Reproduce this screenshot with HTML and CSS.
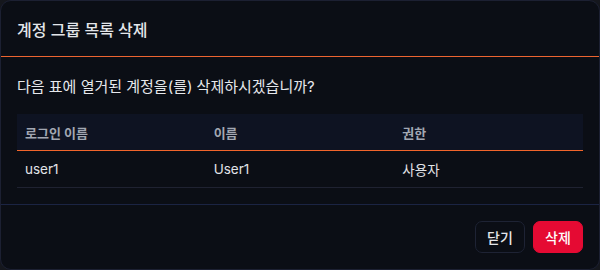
FILE: index.html
```html
<!DOCTYPE html>
<html lang="ko">
<head>
<meta charset="utf-8">
<link rel="stylesheet" href="styles.css">
</head>
<body>
<div class="dialog">
  <div class="dialog-header">계정 그룹 목록 삭제</div>
  <div class="dialog-body">
    <p class="message">다음 표에 열거된 계정을(를) 삭제하시겠습니까?</p>
    <div class="grid">
      <div class="grid-row grid-head">
        <div class="cell">로그인 이름</div><div class="cell">이름</div><div class="cell">권한</div>
      </div>
      <div class="grid-row grid-data">
        <div class="cell">user1</div><div class="cell">User1</div><div class="cell">사용자</div>
      </div>
    </div>
  </div>
  <div class="dialog-footer">
    <button class="btn btn-close">닫기</button>
    <button class="btn btn-delete">삭제</button>
  </div>
</div>
</body>
</html>
```
FILE: styles.css
```css
html, body {
  margin: 0;
  padding: 0;
  background: #15171d;
}
body {
  width: 600px;
  height: 270px;
  font-family: Inter, "Noto Sans CJK KR", sans-serif;
}
.dialog {
  box-sizing: border-box;
  width: 600px;
  height: 270px;
  background: #0b0e15;
  border: 1px solid #1c2032;
  border-radius: 11px;
  display: flex;
  flex-direction: column;
  overflow: hidden;
}
.dialog-header {
  height: 56px;
  box-sizing: border-box;
  padding: 0 16px;
  display: flex;
  align-items: center;
  font-size: 16px;
  font-weight: 500;
  color: #e4e6ea;
  border-bottom: 1px solid #ec6430;
}
.dialog-body {
  padding: 20px 16px 16px 16px;
  border-bottom: 1px solid #1b2443;
}
.message {
  margin: 0 0 17px 0;
  font-size: 15px;
  line-height: 20px;
  color: #e6e8ec;
}
.grid {
  display: flex;
  flex-direction: column;
}
.grid-row {
  display: grid;
  grid-template-columns: 1fr 1fr 1fr;
  box-sizing: border-box;
  align-items: center;
}
.cell {
  padding: 0 8px;
}
.grid-head {
  height: 37px;
  font-size: 13px;
  font-weight: 700;
  color: #a2a7b2;
  background: #0e1322;
  border-bottom: 1px solid #f2652b;
}
.grid-data {
  height: 37px;
  font-size: 13.5px;
  color: #e2e4e8;
  border-bottom: 1px solid #1f2231;
}
.dialog-footer {
  flex: 1;
  display: flex;
  justify-content: flex-end;
  align-items: center;
  gap: 8px;
  padding: 0 16px;
}
.btn {
  box-sizing: border-box;
  width: 50px;
  height: 32px;
  border-radius: 7px;
  font-family: Inter, "Noto Sans CJK KR", sans-serif;
  font-size: 14px;
  font-weight: 500;
  cursor: pointer;
}
.btn-close {
  background: #0b0e15;
  border: 1px solid #1e2334;
  color: #e4e6ea;
}
.btn-delete {
  background: #e50a33;
  border: 1px solid #e50a33;
  color: #ffffff;
}
```
